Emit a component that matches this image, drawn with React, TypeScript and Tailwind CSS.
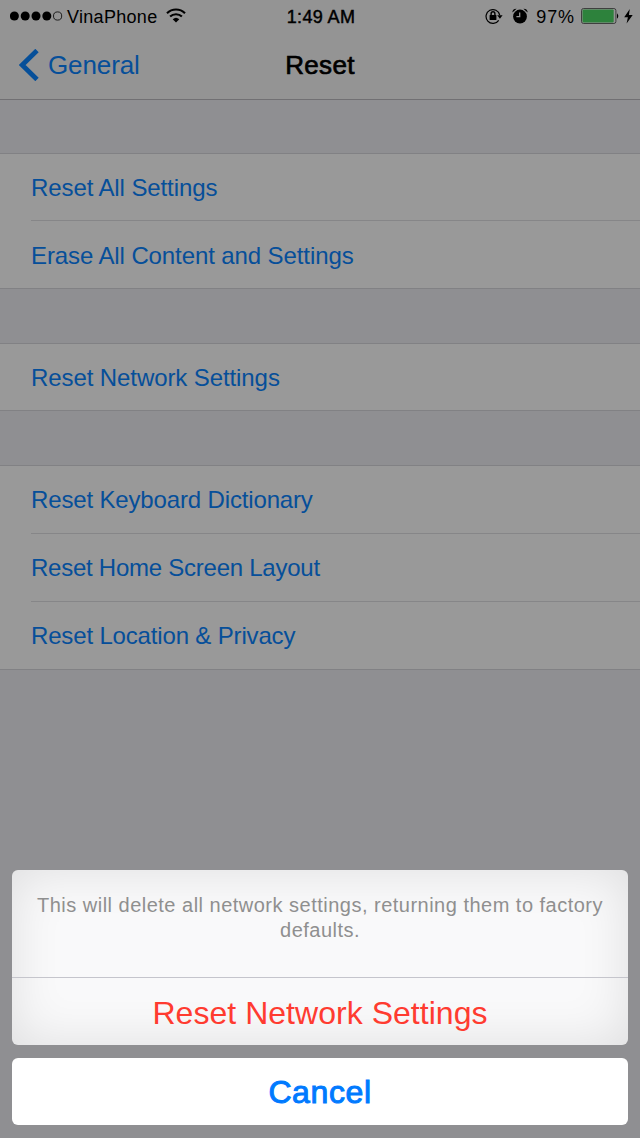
import React from "react";

type Row = { label: string; style: string };

const groups: { gap: string; rows: Row[] }[] = [
  {
    gap: "h-[53px]",
    rows: [
      { label: "Reset All Settings", style: "h-[67px] pt-[2px] tracking-[-0.1px]" },
      { label: "Erase All Content and Settings", style: "h-[67px] pt-[2px] tracking-[-0.1px]" },
    ],
  },
  {
    gap: "h-[54px]",
    rows: [{ label: "Reset Network Settings", style: "h-[66px] pt-[2px] tracking-[-0.09px]" }],
  },
  {
    gap: "h-[54px]",
    rows: [
      { label: "Reset Keyboard Dictionary", style: "h-[68px] tracking-[-0.15px]" },
      { label: "Reset Home Screen Layout", style: "h-[68px] tracking-[-0.25px]" },
      { label: "Reset Location & Privacy", style: "h-[67px] tracking-[-0.16px]" },
    ],
  },
];

function SignalDots() {
  return (
    <svg width="53" height="12" viewBox="0 0 53 12" className="shrink-0">
      {[4.4, 15.2, 26, 36.8].map((x) => (
        <circle key={x} cx={x} cy="5" r="4.5" fill="#000" />
      ))}
      <circle cx="47.6" cy="5" r="4.1" fill="none" stroke="#000" strokeWidth="0.8" />
    </svg>
  );
}

function WifiIcon() {
  return (
    <svg width="20" height="15" viewBox="0 0 20 15" className="shrink-0">
      <path d="M1 5.3C6 .3 14 .3 19 5.3" fill="none" stroke="#000" strokeWidth="2.1" />
      <path d="M4.1 8.6C7.3 5.4 12.7 5.4 15.9 8.6" fill="none" stroke="#000" strokeWidth="2.1" />
      <path d="M6.7 11.3Q10 8.3 13.3 11.3L10 14.6Z" fill="#000" />
    </svg>
  );
}

function RotationLockIcon() {
  return (
    <svg width="18" height="17" viewBox="0 0 18 17" className="shrink-0">
      <path d="M13.7 12.3A6.9 6.9 0 1 1 14.7 7" fill="none" stroke="#000" strokeWidth="1.2" />
      <path d="M12.2 7.2H17.6L14.9 10.7Z" fill="#000" />
      <rect x="4.6" y="7" width="6.8" height="5.1" rx="0.5" fill="#000" />
      <path d="M6.1 7.5V5.7A1.9 1.9 0 0 1 9.9 5.7V7.5" fill="none" stroke="#000" strokeWidth="1.4" />
    </svg>
  );
}

function AlarmIcon() {
  return (
    <svg width="16" height="16" viewBox="0 0 16 16" className="shrink-0">
      <circle cx="8" cy="8.5" r="6.9" fill="#000" />
      <path d="M.4 4.6Q.2 .6 4.6 .7ZM15.6 4.6Q15.8 .6 11.4 .7Z" fill="#000" />
      <path d="M1 5.4L5.5 1.2M15 5.4L10.5 1.2" stroke="#f7f7f7" strokeOpacity="0.7" strokeWidth="0.6" />
      <path d="M7.7 4.4V8.6H4.4" fill="none" stroke="#f7f7f7" strokeWidth="1.3" />
    </svg>
  );
}

function BatteryIcon() {
  return (
    <svg width="38" height="16" viewBox="0 0 38 16" className="shrink-0">
      <rect x="0.5" y="0.5" width="34.4" height="15" rx="2" fill="none" stroke="#444" strokeWidth="0.8" />
      <rect x="1.5" y="1.5" width="31.2" height="13" rx="1" fill="#4cd964" />
      <path d="M36 5.2Q38.6 8 36 10.8Z" fill="#000" />
    </svg>
  );
}

function BoltIcon() {
  return (
    <svg width="9" height="15" viewBox="0 0 9 15" className="shrink-0">
      <path d="M5.8 0L.2 8.2H3.9L2.6 14.6L8.7 6H4.9Z" fill="#000" />
    </svg>
  );
}

function StatusBar() {
  return (
    <div className="grid h-[33px] grid-cols-[1fr_auto_1fr] items-center pl-[10px] pr-[7px] text-[18px] leading-6 text-black">
      <div className="flex items-center">
        <SignalDots />
        <span className="ml-[4px] tracking-[0.3px]">VinaPhone</span>
        <span className="-mt-[2px] ml-[9px]">
          <WifiIcon />
        </span>
      </div>
      <div className="pr-[1px] tracking-[0.35px] [-webkit-text-stroke:0.45px_#000]">1:49 AM</div>
      <div className="flex items-center justify-end">
        <RotationLockIcon />
        <span className="-mt-[1px] ml-[9px]">
          <AlarmIcon />
        </span>
        <span className="ml-[8px] tracking-[0.9px]">97%</span>
        <span className="ml-[6px] -mt-[1px]">
          <BatteryIcon />
        </span>
        <span className="-mt-[1px] ml-[5px]">
          <BoltIcon />
        </span>
      </div>
    </div>
  );
}

function NavBar() {
  return (
    <div className="grid h-[64px] grid-cols-[1fr_auto_1fr] items-center pl-[19px] pr-[19px]">
      <div className="flex items-center text-[#0a84ff]">
        <svg width="20" height="32" viewBox="0 0 20 32" className="shrink-0">
          <path d="M18 1.5L3.2 16L18 30.5" fill="none" stroke="currentColor" strokeWidth="4.8" />
        </svg>
        <span className="ml-[9px] text-[26px] leading-8 tracking-[-0.1px]">General</span>
      </div>
      <div className="text-[26px] leading-8 tracking-[0.3px] text-black [-webkit-text-stroke:0.7px_#000]">Reset</div>
    </div>
  );
}

export default function App() {
  return (
    <div className="relative h-[1138px] w-[640px] overflow-hidden bg-[#efeff4] font-['Liberation_Sans',Arial,sans-serif]">
      <header className="h-[100px] border-b border-[#bcbbc0] bg-[#f7f7f7]">
        <StatusBar />
        <NavBar />
      </header>
      <main>
        {groups.map((group, g) => (
          <section key={g}>
            <div className={group.gap} />
            <ul className="border-y border-[#d8d7dc] bg-white pl-[31px]">
              {group.rows.map((row, i) => (
                <li
                  key={row.label}
                  className={`flex items-center text-[24px] text-[#0a84ff] ${row.style} ${
                    i < group.rows.length - 1 ? "border-b border-[#e0dfe3]" : ""
                  }`}
                >
                  {row.label}
                </li>
              ))}
            </ul>
          </section>
        ))}
      </main>
      <div className="absolute inset-0 flex flex-col justify-end gap-[13px] bg-black/40 px-[12px] pb-[13px]">
        <div className="flex h-[175px] flex-col overflow-hidden rounded-[6px] bg-[#f9f9fa] text-center shadow-[inset_0_0_50px_rgba(0,0,0,0.11)]">
          <p className="h-[107px] pt-[23px] text-[20px] leading-[25px] text-[#8f8f8f]">
            <span className="tracking-[0.49px]">This will delete all network settings, returning them to factory</span>
            <br />
            <span className="tracking-[0.48px]">defaults.</span>
          </p>
          <button className="flex grow items-center justify-center border-t border-[#c5c5cc] pt-[2px] text-[32px] tracking-[0.03px] text-[#ff3b30]">
            Reset Network Settings
          </button>
        </div>
        <button className="h-[67px] rounded-[6px] bg-white text-[32px] tracking-[0.6px] text-[#007aff] [-webkit-text-stroke:1px_#007aff]">
          Cancel
        </button>
      </div>
    </div>
  );
}
